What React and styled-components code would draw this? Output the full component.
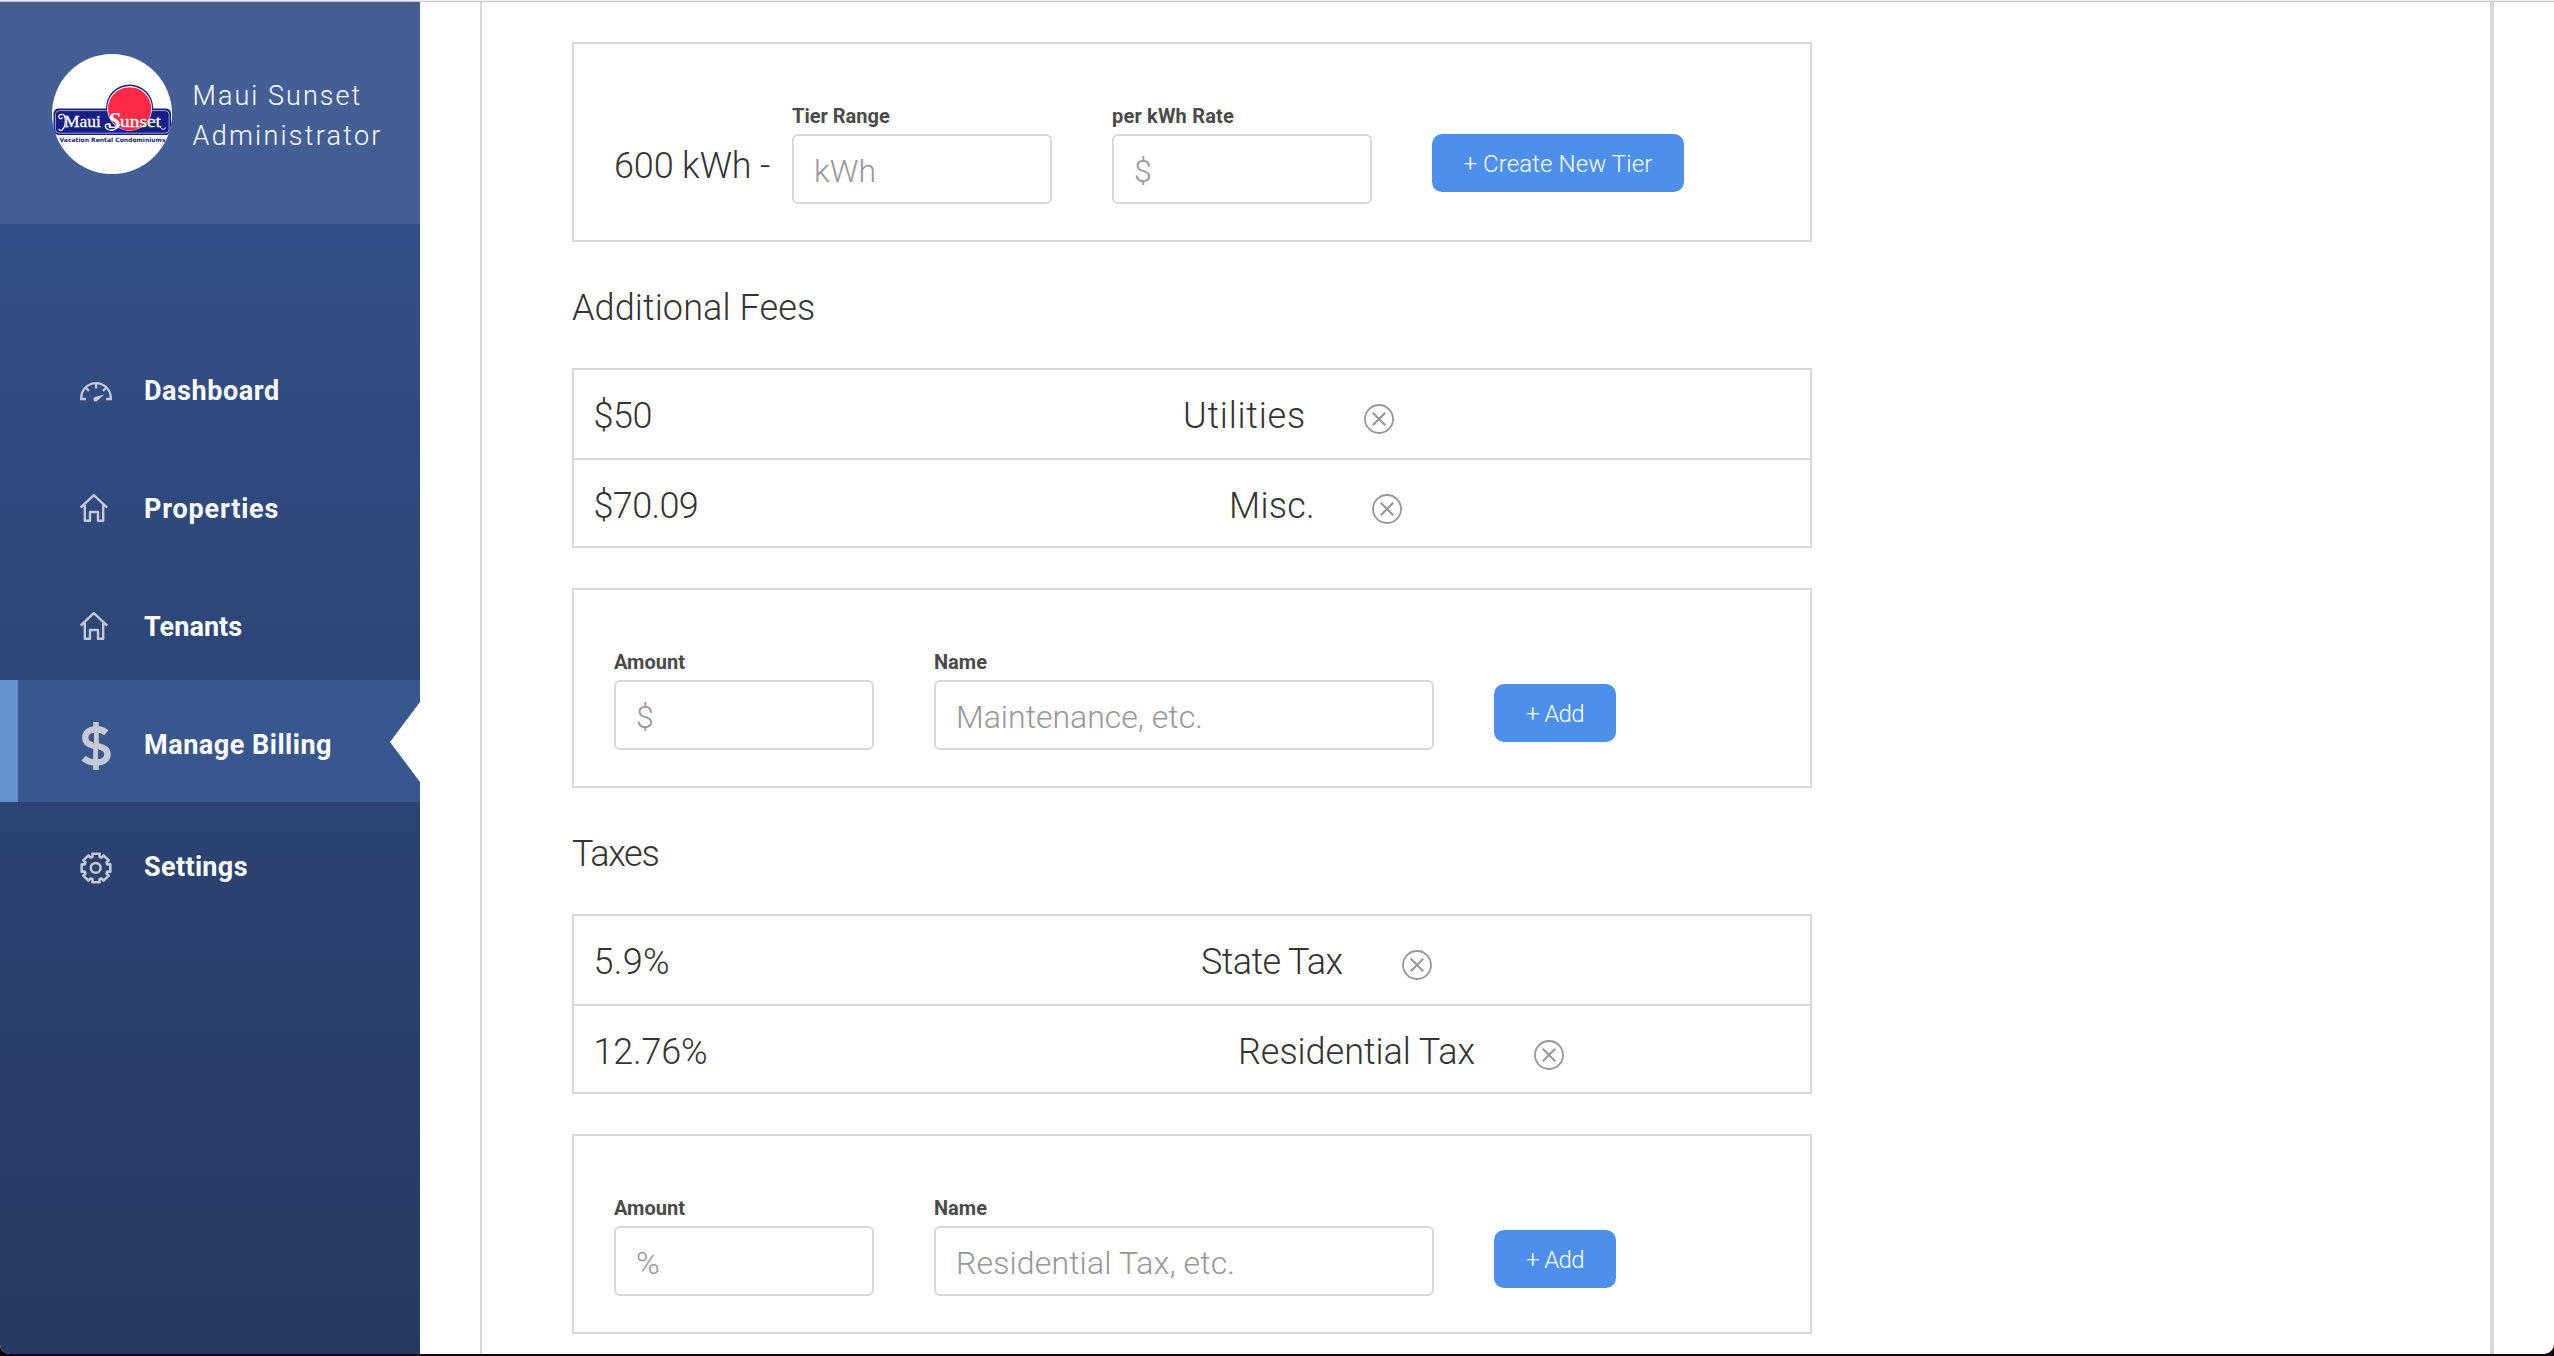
import React from "react";
import styled, { createGlobalStyle } from "styled-components";

const LINE = "#d8d8d8";

const GlobalStyle = createGlobalStyle`
  *, *::before, *::after { box-sizing: border-box; }
  html, body { margin: 0; background: #0d0510; }
  body { font-family: Roboto, "Liberation Sans", sans-serif; overflow: hidden; }
`;

const Window = styled.div`
  display: flex;
  height: 1354px;
  border-top: 1px solid #f1f1f1;
  border-radius: 0 0 10px 10px;
  overflow: hidden;
  background: #fff;
  box-shadow: inset 0 1px 0 #c6c6c6;
`;

const Sidebar = styled.aside`
  width: 420px;
  flex: none;
  margin-top: 1px;
  display: flex;
  flex-direction: column;
  background: linear-gradient(180deg, #335089 0%, #324f87 16%, #263961 100%);
`;

const Profile = styled.header`
  height: 222px;
  flex: none;
  display: flex;
  align-items: flex-start;
  padding: 52px 0 0 52px;
  background: #445f96;
`;

const ProfileName = styled.div`
  margin: 22px 0 0 20.5px;
  color: #fff;
  font-size: 27px;
  font-weight: 300;
  line-height: 40px;
`;

const NameLine = styled.div`
  letter-spacing: ${(p) => p.$track}px;
  white-space: nowrap;
`;

const Nav = styled.nav`
  margin-top: 102px;
  display: flex;
  flex-direction: column;
`;

const NavItem = styled.a`
  position: relative;
  display: flex;
  align-items: flex-start;
  height: ${(p) => (p.$active ? 122 : 118)}px;
  padding-left: ${(p) => (p.$active ? 62 : 80)}px;
  border-left: ${(p) => (p.$active ? "18px solid #6591d0" : "0")};
  background: ${(p) => (p.$active ? "#38578e" : "transparent")};

  &::after {
    content: "";
    display: ${(p) => (p.$active ? "block" : "none")};
    position: absolute;
    right: 0;
    top: 22px;
    width: 30px;
    height: 80px;
    background: #fff;
    clip-path: polygon(100% 0, 100% 100%, 0 50%);
  }
`;

const NavIcon = styled.span`
  width: 64px;
  flex: none;
  display: flex;
  padding-top: ${(p) => p.$top}px;
  color: #c5c9d6;
`;

const NavLabel = styled.span`
  margin-top: 50px;
  line-height: 30px;
  font-size: 27px;
  font-weight: 700;
  letter-spacing: ${(p) => p.$track}px;
  color: #fff;
  white-space: nowrap;
`;

const Content = styled.main`
  flex: 1;
  margin: 1px 60px 0 60px;
  border-left: 2px solid ${LINE};
  border-right: 4px solid ${LINE};
  padding: 40px 0 0 90px;
`;

const Panel = styled.section`
  width: 1240px;
  height: 200px;
  border: 2px solid ${LINE};
  padding: 60px 40px 0;
  display: flex;
  align-items: flex-start;
`;

const Heading = styled.h2`
  margin: 44px 0 38px;
  font-size: 36px;
  line-height: 44px;
  font-weight: 300;
  letter-spacing: ${(p) => p.$track}px;
  color: #333;
`;

const List = styled.ul`
  list-style: none;
  width: 1240px;
  height: 180px;
  margin: 0 0 40px;
  padding: 0;
  border: 2px solid ${LINE};
  border-top: 0;
`;

const Row = styled.li`
  display: grid;
  grid-template-columns: ${(p) => p.$columns};
  align-items: start;
  height: 90px;
  border-top: 2px solid ${LINE};
  padding: 26px 0 0 19.5px;
`;

const Value = styled.span`
  font-size: 36px;
  line-height: 40px;
  font-weight: 300;
  letter-spacing: ${(p) => p.$track}px;
  color: #333;
  white-space: nowrap;
`;

const Remove = styled.button`
  display: flex;
  width: 30px;
  height: 30px;
  margin-top: 8px;
  padding: 0;
  border: 0;
  background: none;
  color: #979797;
`;

const Lead = styled.span`
  width: 178px;
  flex: none;
  margin-top: 38px;
  font-size: 36px;
  line-height: 48px;
  font-weight: 300;
  letter-spacing: -0.14px;
  color: #333;
  white-space: nowrap;
`;

const Field = styled.label`
  display: flex;
  flex-direction: column;
  width: ${(p) => p.$width}px;
  flex: none;
  margin-right: 60px;
`;

const FieldLabel = styled.span`
  margin-bottom: 6px;
  font-size: 20px;
  line-height: 24px;
  font-weight: 700;
  letter-spacing: ${(p) => p.$track || 0}px;
  color: #4a4a4a;
`;

const Input = styled.input`
  width: 100%;
  height: 70px;
  border: 2px solid ${LINE};
  border-radius: 6px;
  padding: 4px 20px 0;
  background: #fff;
  font-family: inherit;
  font-size: 32px;
  font-weight: 300;
  letter-spacing: ${(p) => p.$track || 0}px;

  &::placeholder { color: #979797; opacity: 1; }
`;

const Button = styled.button`
  width: ${(p) => p.$width}px;
  height: 58px;
  margin-top: ${(p) => p.$top}px;
  padding: 2px 0 0;
  border: 0;
  border-radius: 10px;
  background: #4d90ec;
  color: #fff;
  font-family: inherit;
  font-size: 24px;
  font-weight: 300;
  letter-spacing: ${(p) => p.$track || 0}px;
  white-space: nowrap;
`;

const Logo = () => (
  <svg width="120" height="120" viewBox="0 0 120 120">
    <defs>
      <clipPath id="disc"><circle cx="60" cy="60" r="60" /></clipPath>
    </defs>
    <circle cx="60" cy="60" r="60" fill="#fff" />
    <g clipPath="url(#disc)">
      <circle cx="77.6" cy="54" r="23.6" fill="#171f86" />
      <rect x="1.5" y="54.5" width="117.5" height="26.5" rx="5" fill="#171f86" />
      <rect x="3.4" y="56.6" width="113.7" height="22.6" rx="4" fill="none" stroke="#a9acd8" strokeWidth="0.9" />
      <circle cx="77.6" cy="54.4" r="22.4" fill="#fff" />
      <circle cx="77.6" cy="54.8" r="21.6" fill="#ff2a45" />
      <text x="12" y="73.4" textLength="37" lengthAdjust="spacingAndGlyphs" fontFamily="Liberation Serif, serif" fontSize="17" fill="#fff" stroke="#fff" strokeWidth=".3">Maui</text>
      <text x="56" y="74" fontFamily="Liberation Serif, serif" fontSize="23" fontWeight="700" fontStyle="italic" fill="#fff">S</text>
      <text x="68" y="73.4" textLength="41" lengthAdjust="spacingAndGlyphs" fontFamily="Liberation Serif, serif" fontSize="17" fill="#fff" stroke="#fff" strokeWidth=".3">unset</text>
      <path d="M12.5 61.5c-3-2.5-6.5-.5-5.500 2s4 1 3-.5M12.500 61.500c1.500 5 1 12-2.500 14.500-1.500 1-3 .2-3.200-1.200" fill="none" stroke="#fff" strokeWidth="1.2" />
      <path d="M68 70c-2 5-8 7.500-12 5.500s-3-5.500 0-5.500 3 3 1 3.500" fill="none" stroke="#fff" strokeWidth="1.3" />
      <path d="M108 73c2 3 5 3 5.500.5" fill="none" stroke="#fff" strokeWidth="1" />
      <text x="7.5" y="87.6" textLength="106" lengthAdjust="spacingAndGlyphs" fontFamily="DejaVu Sans, sans-serif" fontWeight="700" fontSize="6" fill="#171f86">Vacation Rental Condominiums</text>
    </g>
  </svg>
);

const GaugeIcon = () => (
  <svg width="32" height="20" viewBox="0 0 32 20" fill="none" stroke="currentColor" strokeWidth="2.3">
    <path d="M6 17H1.2V16A14.8 14.8 0 0 1 30.8 16V17H26" />
    <path d="M16 1.500V6.500M6.200 6.200L9 9M25.800 6.200L23 9" />
    <path d="M24.500 12.200L15 15.100a2.300 2.300 0 1 0 2.600 3.500z" fill="currentColor" stroke="none" />
  </svg>
);

const HouseIcon = () => (
  <svg width="28" height="28" viewBox="0 0 28 28" fill="none" stroke="currentColor" strokeWidth="2.4" strokeLinejoin="round">
    <path d="M.7 13.600L13.800 1.200L27.200 13.600" strokeWidth="2.4" />
    <path d="M4.800 11V26.800H10V18H18V26.800H23.200V11" />
  </svg>
);

const DollarIcon = () => (
  <svg width="32" height="48" viewBox="0 0 32 48" fill="none" stroke="currentColor">
    <path d="M26.400 10.800C23.800 8.600 20.600 7.300 16.500 7.300C9.500 7.300 5.300 10.700 5.300 15.500C5.300 20.800 8.500 22.700 14 23.800L17.500 24.400C24 25.400 27.500 27.200 27.500 32.200C27.500 37.600 22.800 40.500 16 40.500C11 40.500 6.800 39 3.600 36.200" strokeWidth="6.4" />
    <path d="M16 0V48" strokeWidth="5.600" />
    <path d="M13.400 11V21.200M18.600 27.200V37" stroke="#38578e" strokeWidth="1" />
  </svg>
);

const gearPath = (() => {
  const pts = [];
  for (let i = 0; i < 8; i += 1) {
    const a = (i * Math.PI) / 4 - Math.PI / 2;
    [[-0.3, 11.8], [-0.25, 14.8], [0.25, 14.8], [0.3, 11.8]].forEach(([d, r]) => {
      pts.push(`${(16 + r * Math.cos(a + d)).toFixed(2)} ${(16 + r * Math.sin(a + d)).toFixed(2)}`);
    });
  }
  return `M${pts.join("L")}Z`;
})();

const GearIcon = () => (
  <svg width="32" height="32" viewBox="0 0 32 32" fill="none" stroke="currentColor" strokeWidth="2.5" strokeLinejoin="round">
    <path d={gearPath} />
    <circle cx="15.7" cy="15.900" r="4.900" />
  </svg>
);

const CloseIcon = () => (
  <svg width="30" height="30" viewBox="0 0 30 30" fill="none" stroke="currentColor" strokeWidth="1.8">
    <circle cx="15" cy="15" r="14" />
    <path d="M8.800 8.800L21.200 21.200M21.200 8.800L8.800 21.200" strokeWidth="2.1" />
  </svg>
);

const navItems = [
  { label: "Dashboard", icon: GaugeIcon, top: 56, track: 0.56 },
  { label: "Properties", icon: HouseIcon, top: 50, track: 0.8 },
  { label: "Tenants", icon: HouseIcon, top: 50, track: 0.05 },
  { label: "Manage Billing", icon: DollarIcon, top: 42, track: 0.52, active: true },
  { label: "Settings", icon: GearIcon, top: 50, track: 0.35 },
];

const fees = [
  { amount: "$50", name: "Utilities", columns: "589.5px 181px 30px", at: -0.47, nt: 0.77 },
  { amount: "$70.09", name: "Misc.", columns: "635.5px 143px 30px", at: -0.65, nt: 0.24 },
];

const taxes = [
  { amount: "5.9%", name: "State Tax", columns: "607.5px 201px 30px", at: 0.35, nt: -0.6 },
  { amount: "12.76%", name: "Residential Tax", columns: "644.5px 296px 30px", at: -0.2, nt: -0.05 },
];

const Charges = ({ items }) => (
  <List>
    {items.map((it) => (
      <Row key={it.name} $columns={it.columns}>
        <Value $track={it.at}>{it.amount}</Value>
        <Value $track={it.nt}>{it.name}</Value>
        <Remove aria-label="Remove"><CloseIcon /></Remove>
      </Row>
    ))}
  </List>
);

const AddPanel = ({ unit, hint, track }) => (
  <Panel>
    <Field $width={260}>
      <FieldLabel>Amount</FieldLabel>
      <Input placeholder={unit} />
    </Field>
    <Field $width={500}>
      <FieldLabel>Name</FieldLabel>
      <Input placeholder={hint} $track={track} />
    </Field>
    <Button $width={122} $top={34} $track={-0.6}>+ Add</Button>
  </Panel>
);

export default function App() {
  return (
    <>
      <GlobalStyle />
      <Window>
        <Sidebar>
          <Profile>
            <Logo />
            <ProfileName>
              <NameLine $track={2.04}>Maui Sunset</NameLine>
              <NameLine $track={2.25}>Administrator</NameLine>
            </ProfileName>
          </Profile>
          <Nav>
            {navItems.map(({ label, icon: Icon, top, track, active }) => (
              <NavItem key={label} $active={active}>
                <NavIcon $top={top}><Icon /></NavIcon>
                <NavLabel $track={track}>{label}</NavLabel>
              </NavItem>
            ))}
          </Nav>
        </Sidebar>
        <Content>
          <Panel>
            <Lead>600 kWh -</Lead>
            <Field $width={260}>
              <FieldLabel>Tier Range</FieldLabel>
              <Input placeholder="kWh" />
            </Field>
            <Field $width={260}>
              <FieldLabel $track={0.18}>per kWh Rate</FieldLabel>
              <Input placeholder="$" />
            </Field>
            <Button $width={252} $top={30} $track={0.1}>+ Create New Tier</Button>
          </Panel>
          <Heading $track={0.1}>Additional Fees</Heading>
          <Charges items={fees} />
          <AddPanel unit="$" hint="Maintenance, etc." track={0} />
          <Heading $track={-1.3}>Taxes</Heading>
          <Charges items={taxes} />
          <AddPanel unit="%" hint="Residential Tax, etc." track={0.14} />
        </Content>
      </Window>
    </>
  );
}
